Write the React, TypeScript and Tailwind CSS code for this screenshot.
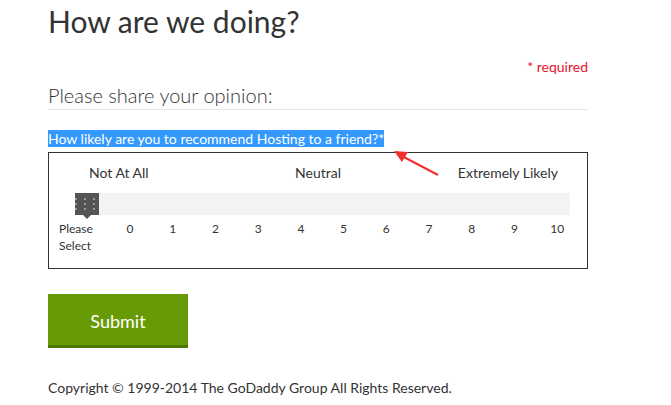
import React from "react";

const numbers = ["0", "1", "2", "3", "4", "5", "6", "7", "8", "9", "10"];

function Handle() {
  return (
    <div className="relative w-[24px] h-[22px] bg-[#545454] grid grid-cols-3 gap-x-[3px] gap-y-[3px] place-content-center">
      {Array.from({ length: 9 }).map((_, i) => (
        <span key={i} className="block w-[2px] h-[2px] bg-[#9a9a9a]" />
      ))}
      <span className="absolute left-1/2 -translate-x-1/2 top-full w-0 h-0 border-l-[4px] border-r-[4px] border-t-[4px] border-l-transparent border-r-transparent border-t-[#545454]" />
    </div>
  );
}

function Arrow() {
  return (
    <svg className="absolute left-[388px] top-[146px]" width="56" height="34" viewBox="0 0 56 34">
      <line x1="50" y1="29" x2="12" y2="9" stroke="#f03030" strokeWidth="2" />
      <polygon points="6,5 20,6 14,16" fill="#f03030" />
    </svg>
  );
}

export default function App() {
  return (
    <div className="relative w-[671px] h-[405px] bg-white text-[#333] font-['Segoe_UI','Lato','Noto_Sans',sans-serif] overflow-hidden">
      <div className="w-[540px] ml-[48px]">
        <h1 className="text-[30px] leading-[36px] pt-[3px] font-normal">How are we doing?</h1>
        <div className="mt-[20px] text-right text-[14px] leading-[16px] text-[#e8112d]">* required</div>
        <div className="mt-[8px] text-[20px] leading-[24px] font-light border-b border-[#e5e5e5] pb-[2px]">
          Please share your opinion:
        </div>
        <div className="mt-[20px] text-[14px] leading-[18px]">
          <span className="bg-[#3399ff] text-white">How likely are you to recommend Hosting to a friend?*</span>
        </div>
        <div className="mt-[4px] border border-[#333] h-[117px]">
          <div className="grid grid-cols-3 mt-[11px] text-[14px] leading-[18px]">
            <div className="pl-[40px]">Not At All</div>
            <div className="text-center">Neutral</div>
            <div className="text-right pr-[29px]">Extremely Likely</div>
          </div>
          <div className="ml-[26px] mr-[17px] mt-[11px] h-[22px] bg-[#f3f3f3]">
            <Handle />
          </div>
          <div className="flex pl-[10px] mt-[5px] text-[12px] leading-[17px]">
            <div className="w-[49.6px]">
              Please
              <br />
              Select
            </div>
            <div className="grid grid-cols-11 w-[470px]">
              {numbers.map((n) => (
                <div key={n} className="text-center">
                  {n}
                </div>
              ))}
            </div>
          </div>
        </div>
        <button className="mt-[25px] w-[140px] h-[54px] pt-[3px] bg-[#689a06] border-b-[3px] border-[#4c7a00] text-white text-[18px] flex items-center justify-center">
          Submit
        </button>
        <div className="mt-[31px] text-[14px] leading-[18px]">
          Copyright © 1999-2014 The GoDaddy Group All Rights Reserved.
        </div>
      </div>
      <Arrow />
    </div>
  );
}
